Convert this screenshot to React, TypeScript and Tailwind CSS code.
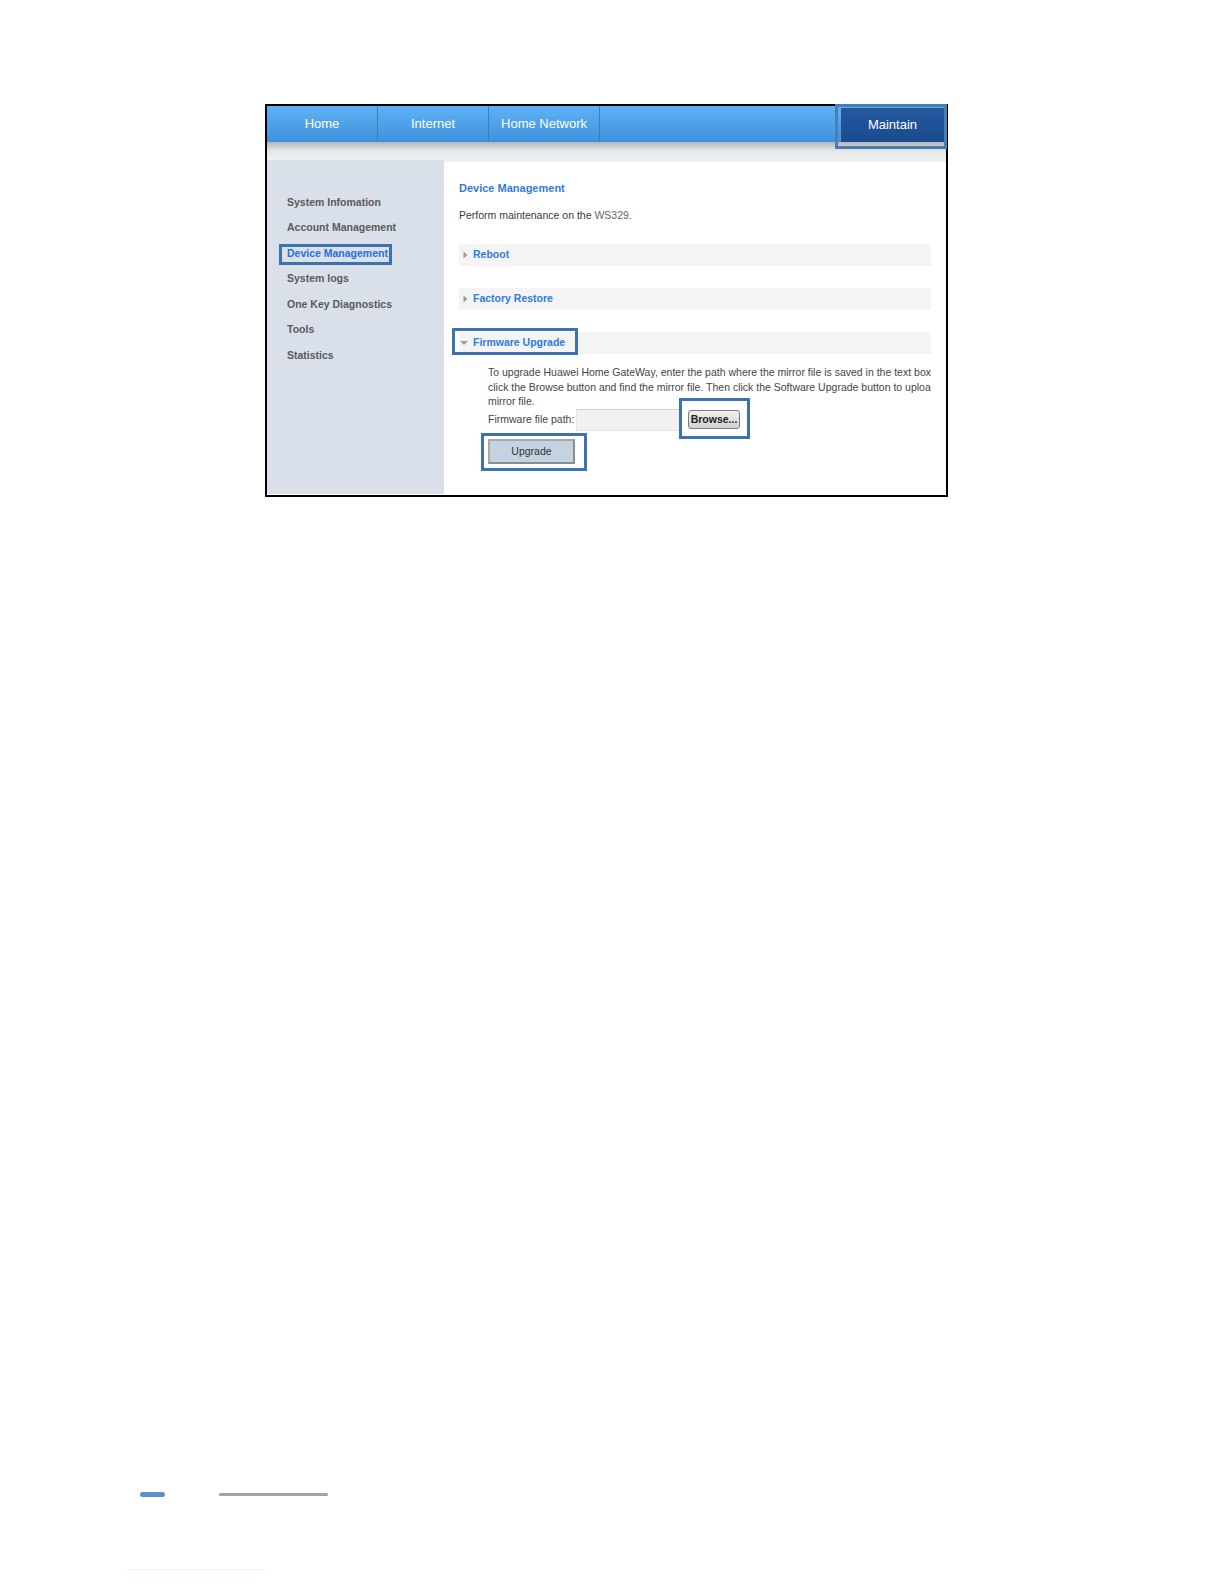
import React from "react";

const FONT = { fontFamily: '"Liberation Sans", Arial, sans-serif' };

// highlight frame drawn over a control, as in the manual screenshot
const Mark = ({ className }: { className: string }) => (
  <span className={`pointer-events-none absolute border-[3px] border-[#3d72ad] ${className}`} />
);

const NavTab = ({ label }: { label: string }) => (
  <div className="flex h-full w-[111px] items-center justify-center border-r border-[#3a7fc6] text-[13px] text-white">
    {label}
  </div>
);

const sideItems = [
  "System Infomation",
  "Account Management",
  "Device Management",
  "System logs",
  "One Key Diagnostics",
  "Tools",
  "Statistics",
];

const Arrow = ({ down }: { down?: boolean }) =>
  down ? (
    <svg width="8" height="6" viewBox="0 0 8 6" className="mr-[5px]">
      <path d="M0 1 L8 1 L4 5 Z" fill="#8fa4bb" />
    </svg>
  ) : (
    <svg width="5" height="8" viewBox="0 0 5 8" className="mr-[5px]">
      <path d="M0.5 0.5 L4.5 4 L0.5 7.5 Z" fill="#9a9a9a" />
    </svg>
  );

const Section = ({ title, open }: { title: string; open?: boolean }) => (
  <div className={`relative flex h-[22px] items-center bg-[#f4f4f4] ${open ? "pl-[1px]" : "pl-[4px]"}`}>
    <Arrow down={open} />
    <span className="text-[10.5px] font-bold text-[#2f7be0]">{title}</span>
    {open && <Mark className="left-[-7px] top-[-4px] h-[27px] w-[126px]" />}
  </div>
);

export default function App() {
  return (
    <div className="flex h-[1584px] w-[1224px] flex-col bg-white" style={FONT}>
      {/* screenshot frame */}
      <div className="ml-[265px] mt-[104px] h-[393px] w-[683px] border-2 border-black">
        {/* top nav */}
        <div className="flex h-[36px] bg-gradient-to-b from-[#5eb2f3] to-[#3f91dd]">
          <NavTab label="Home" />
          <NavTab label="Internet" />
          <NavTab label="Home Network" />
          <div className="relative ml-auto mr-[2px] mt-[2px] flex h-[34px] w-[103px] items-center justify-center bg-gradient-to-b from-[#2358a0] to-[#1b4b8e] text-[13px] text-white">
            Maintain
            <Mark className="-left-[6px] -right-[3px] -top-[4px] -bottom-[7px] border-[#4b7db2]" />
          </div>
        </div>
        <div className="h-[18px] bg-gradient-to-b from-[#b4b8bd] via-[#e6e7e8] to-[#eff0f1]" />

        {/* body */}
        <div className="flex h-[334px] bg-[#eef0f2]">
          <div className="w-[177px] bg-[#d9e0ea] pl-[20px] pt-[29px]">
            {sideItems.map((item) => {
              const active = item === "Device Management";
              return (
                <div key={item} className="flex h-[25.5px] items-center">
                  <span
                    className={`relative text-[10.5px] font-bold leading-[14px] ${
                      active ? "text-[#2a6fe0]" : "text-[#5a5a5a]"
                    }`}
                  >
                    {item}
                    {active && <Mark className="-left-[8px] -right-[4px] -top-[2px] -bottom-[5px]" />}
                  </span>
                </div>
              );
            })}
          </div>

          <div className="mt-[2px] flex-1 overflow-hidden bg-white pl-[15px] pr-[15px] pt-[19px]">
            <div className="text-[11px] font-bold leading-[14px] text-[#2f7be0]">Device Management</div>
            <div className="mt-[13px] text-[10.5px] leading-[14px] text-[#3a3a3a]">
              Perform maintenance on the <span className="text-[#666]">WS329</span>.
            </div>

            <div className="mt-[22px]">
              <Section title="Reboot" />
            </div>
            <div className="mt-[22px]">
              <Section title="Factory Restore" />
            </div>
            <div className="mt-[22px]">
              <Section title="Firmware Upgrade" open />
            </div>

            <div className="mt-[11px] pl-[29px] text-[10.5px] leading-[14.5px] text-[#444]">
              <div className="overflow-hidden whitespace-nowrap">
                To upgrade Huawei Home GateWay, enter the path where the mirror file is saved in the text box, or
              </div>
              <div className="overflow-hidden whitespace-nowrap">
                click the Browse button and find the mirror file. Then click the Software Upgrade button to upload the
              </div>
              <div>mirror file.</div>

              <div className="flex h-[22px] items-center">
                <span className="w-[88px] whitespace-nowrap">Firmware file path:</span>
                <div className="h-[22px] w-[104px] border border-[#e4e4e4] border-t-[#d2d2d2] bg-[#f1f1f1]" />
                <div className="relative ml-[8px]">
                  <div className="flex h-[19px] w-[52px] items-center justify-center rounded-[3px] border border-[#7c7c7c] bg-gradient-to-b from-[#f0f0f0] to-[#d2d2d2] text-[10.5px] font-bold text-[#222]">
                    Browse...
                  </div>
                  <Mark className="-left-[9px] -right-[10px] -top-[12px] -bottom-[10px]" />
                </div>
              </div>

              <div className="relative mt-[8px] w-[87px]">
                <div className="flex h-[25px] w-[87px] items-center justify-center border-2 border-[#8c8c8c] border-l-[#a8a8a8] border-t-[#a8a8a8] bg-[#c4d3e2] text-[10.5px] text-[#333]">
                  Upgrade
                </div>
                <Mark className="-left-[7px] -right-[12px] -top-[6px] -bottom-[7px]" />
              </div>
            </div>
          </div>
        </div>
      </div>

      {/* page footer marks */}
      <div className="ml-[140px] mt-[995px] flex items-center">
        <div className="h-[5px] w-[25px] rounded-full bg-[#5b8fd1]" />
        <div className="ml-[54px] h-[3px] w-[109px] rounded-full bg-[#a3a3a3]" />
      </div>
      <div className="ml-[126px] mt-[72px] h-px w-[140px] bg-[#f4f4df]" />
    </div>
  );
}
